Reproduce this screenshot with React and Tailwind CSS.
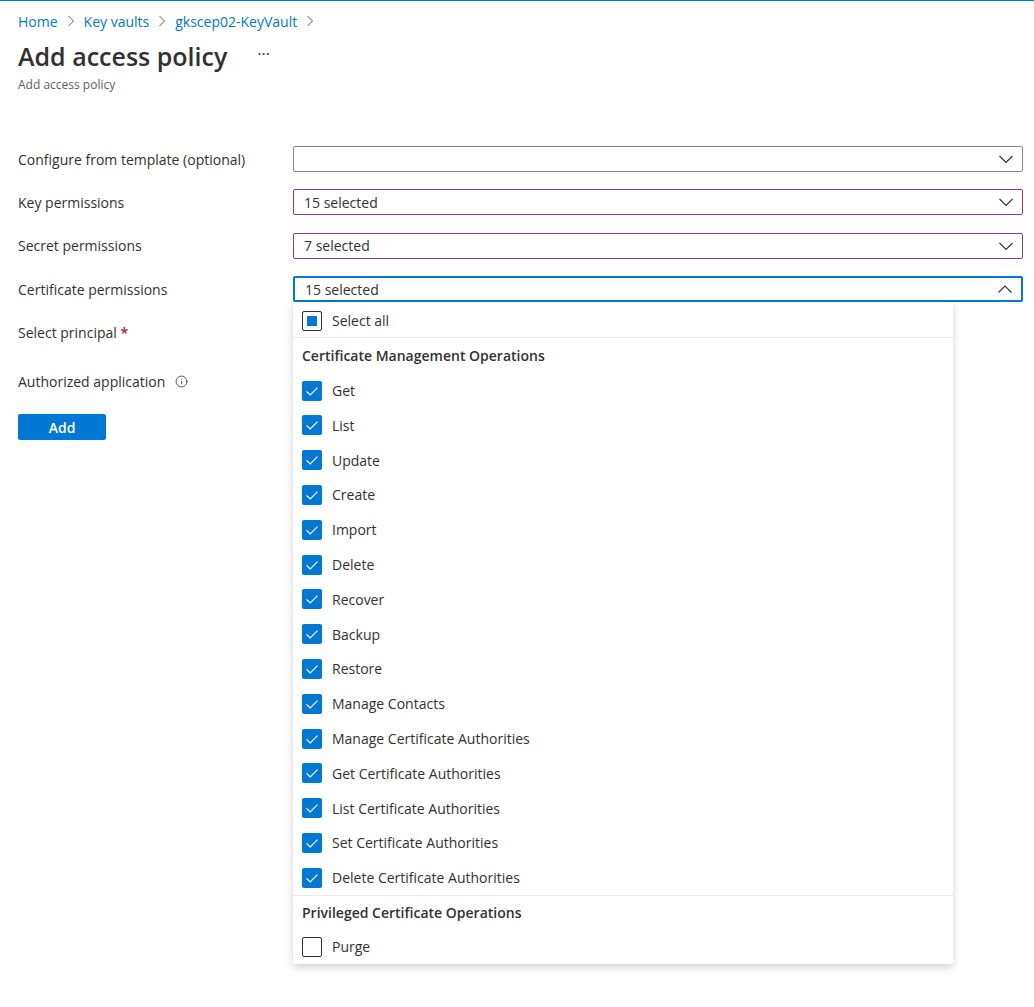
import { Info } from 'lucide-react';

const font = { fontFamily: '"Open Sans", "Noto Sans", Arial, sans-serif' };

const certOps = [
  'Get', 'List', 'Update', 'Create', 'Import', 'Delete', 'Recover', 'Backup', 'Restore',
  'Manage Contacts', 'Manage Certificate Authorities', 'Get Certificate Authorities',
  'List Certificate Authorities', 'Set Certificate Authorities', 'Delete Certificate Authorities',
];

function Chevron({ up }) {
  return (
    <svg width="16" height="16" viewBox="0 0 16 16" className="text-[#323130]">
      <path d={up ? 'M1.5 11.5 L8 5 L14.5 11.5' : 'M1.5 5 L8 11.5 L14.5 5'} fill="none" stroke="currentColor" strokeWidth="1.1" />
    </svg>
  );
}

function Crumb() {
  return (
    <svg width="8" height="12" viewBox="0 0 8 12" className="text-[#605e5c]">
      <path d="M1.5 1 L6.5 6 L1.5 11" fill="none" stroke="currentColor" strokeWidth="1" />
    </svg>
  );
}

function Checkbox({ state }) {
  if (state === 'checked') {
    return (
      <div className="w-5 h-5 rounded-[2px] bg-[#0078d4] flex items-center justify-center shrink-0">
        <svg width="20" height="20" viewBox="0 0 20 20">
          <path d="M4.5 10.3 L8.2 14 L15.5 6.7" fill="none" stroke="white" strokeWidth="1.2" />
        </svg>
      </div>
    );
  }
  return (
    <div className="w-5 h-5 rounded-[2px] border border-[#323130] bg-white flex items-center justify-center shrink-0">
      {state === 'mixed' && <div className="w-[10px] h-[10px] bg-[#0078d4]" />}
    </div>
  );
}

function Dropdown({ value, border, up, children }) {
  return (
    <div className="relative flex-1">
      <div className={`h-[26px] flex items-center justify-between pl-[10px] pr-[8px] rounded-[2px] ${border}`}>
        <span className="text-[14px] text-[#323130]">{value}</span>
        <Chevron up={up} />
      </div>
      {children}
    </div>
  );
}

function Row({ label, children }) {
  return (
    <div className="flex items-center">
      <div className="w-[275px] text-[14px] text-[#323130]">{label}</div>
      {children}
    </div>
  );
}

export default function App() {
  return (
    <div className="min-h-screen bg-white border-t border-[#0078d4]" style={font}>
      <div className="pl-[18px] pr-[11px]">
        <div className="flex items-center gap-[9px] pt-[9px] text-[14px] text-[#0078d4] h-[31px]">
          <span>Home</span>
          <Crumb />
          <span>Key vaults</span>
          <Crumb />
          <span>gkscep02-KeyVault</span>
          <Crumb />
        </div>
        <div className="flex items-center mt-[8px]">
          <h1 className="text-[25px] font-semibold text-[#323130] leading-[32px]">Add access policy</h1>
          <span className="ml-[30px] text-[16px] text-[#323130] -mt-[4px]">···</span>
        </div>
        <div className="text-[12px] text-[#605e5c] mt-[4px]">Add access policy</div>

        <div className="mt-[52px] flex flex-col gap-[17.4px]">
          <Row label="Configure from template (optional)">
            <Dropdown value="" border="border border-[#8a8886]" />
          </Row>
          <Row label="Key permissions">
            <Dropdown value="15 selected" border="border border-[#7f3b9e]" />
          </Row>
          <Row label="Secret permissions">
            <Dropdown value="7 selected" border="border border-[#7f3b9e]" />
          </Row>
          <Row label="Certificate permissions">
            <Dropdown value="15 selected" border="border-2 border-[#0078d4]" up>
              <div className="absolute left-0 top-[26px] w-[660px] bg-white shadow-[0_3px_8px_rgba(0,0,0,0.18)] z-10 text-[14px] text-[#323130]">
                <div className="h-[36px] flex items-center gap-[10px] pl-[9px] pt-[2px] border-b border-[#edebe9]">
                  <Checkbox state="mixed" />
                  <span>Select all</span>
                </div>
                <div className="h-[35px] flex items-center pl-[9px] font-semibold">Certificate Management Operations</div>
                {certOps.map((op) => (
                  <div key={op} className="h-[34.8px] flex items-center gap-[10px] pl-[9px]">
                    <Checkbox state="checked" />
                    <span>{op}</span>
                  </div>
                ))}
                <div className="border-t border-[#edebe9] h-[35px] flex items-center pl-[9px] pb-[2px] font-semibold">Privileged Certificate Operations</div>
                <div className="h-[34px] flex items-center gap-[10px] pl-[9px] pb-[1px]">
                  <Checkbox state="empty" />
                  <span>Purge</span>
                </div>
              </div>
            </Dropdown>
          </Row>
        </div>

        <div className="mt-[20px] text-[14px] text-[#323130]">
          Select principal <span className="text-[#a4262c] font-semibold">*</span>
        </div>
        <div className="mt-[28px] flex items-center gap-[10px] text-[14px] text-[#323130]">
          <span>Authorized application</span>
          <Info size={13} strokeWidth={1.5} className="text-[#323130]" />
        </div>
        <button className="mt-[22px] w-[88px] h-[26px] bg-[#0078d4] rounded-[2px] text-white text-[14px] font-semibold">
          Add
        </button>
      </div>
    </div>
  );
}
